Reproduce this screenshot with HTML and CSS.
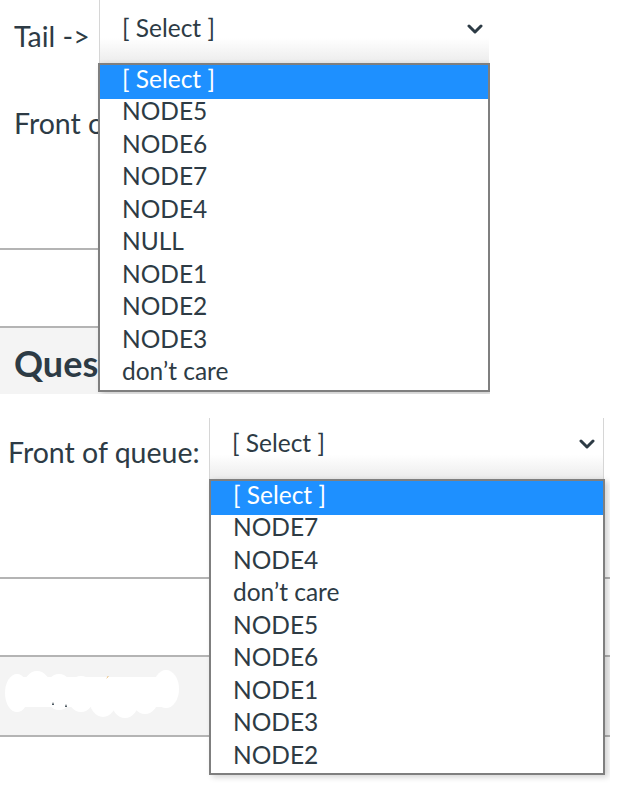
FILE: index.html
```html
<!DOCTYPE html>
<html>
<head>
<meta charset="utf-8">
<link rel="stylesheet" href="styles.css">
</head>
<body>
<div class="shot shot-top">
  <div class="row-select">
    <span class="label label-tail">Tail -&gt;</span>
    <div class="select select-top">
      <span class="select-text">[ Select ]</span>
      <svg class="chev" width="16" height="10" viewBox="0 0 16 10"><polyline points="2,2 8,8 14,2" fill="none" stroke="#2d3b45" stroke-width="3" stroke-linecap="round" stroke-linejoin="round"/></svg>
    </div>
  </div>
  <div class="row-front">
    <div class="clip"><span class="label">Front of queue:</span></div>
  </div>
  <div class="rule"></div>
  <div class="blank blank-top"></div>
  <div class="rule"></div>
  <div class="band band-top"><div class="clip"><span class="heading">Question 2</span></div></div>

  <ul class="dropdown dropdown-top">
    <li class="opt selected">[ Select ]</li>
    <li class="opt">NODE5</li>
    <li class="opt">NODE6</li>
    <li class="opt">NODE7</li>
    <li class="opt">NODE4</li>
    <li class="opt">NULL</li>
    <li class="opt">NODE1</li>
    <li class="opt">NODE2</li>
    <li class="opt">NODE3</li>
    <li class="opt">don’t care</li>
  </ul>
</div>

<div class="shot shot-bottom">
  <div class="gap-top"></div>
  <div class="row-select2">
    <span class="label label-front">Front of queue:</span>
    <div class="select select-bottom">
      <span class="select-text">[ Select ]</span>
      <svg class="chev" width="16" height="10" viewBox="0 0 16 10"><polyline points="2,2 8,8 14,2" fill="none" stroke="#2d3b45" stroke-width="3" stroke-linecap="round" stroke-linejoin="round"/></svg>
    </div>
  </div>
  <div class="blank blank-b1"></div>
  <div class="rule"></div>
  <div class="blank blank-b2"></div>
  <div class="rule"></div>
  <div class="band band-bottom">
    <svg class="scribble" width="180" height="56" viewBox="0 0 180 56">
      <g fill="#ffffff">
        <ellipse cx="14" cy="26" rx="12" ry="19"/>
        <ellipse cx="34" cy="22" rx="14" ry="18"/>
        <ellipse cx="56" cy="25" rx="14" ry="18"/>
        <ellipse cx="78" cy="27" rx="14" ry="18"/>
        <ellipse cx="100" cy="31" rx="14" ry="19"/>
        <ellipse cx="122" cy="33" rx="14" ry="18"/>
        <ellipse cx="142" cy="29" rx="14" ry="18"/>
        <ellipse cx="163" cy="22" rx="13" ry="19"/>
        <rect x="10" y="10" width="160" height="30" rx="10"/>
      </g>
      <path d="M49 38 l1 -3 l1 3 z M62 40 l1 -3 l1 3 z" fill="#2d3b45"/>
      <path d="M103 12 l2 -3 l0.6 0.6 z" fill="#e0a040"/>
    </svg>
  </div>
  <div class="rule"></div>

  <ul class="dropdown dropdown-bottom">
    <li class="opt selected">[ Select ]</li>
    <li class="opt">NODE7</li>
    <li class="opt">NODE4</li>
    <li class="opt">don’t care</li>
    <li class="opt">NODE5</li>
    <li class="opt">NODE6</li>
    <li class="opt">NODE1</li>
    <li class="opt">NODE3</li>
    <li class="opt">NODE2</li>
  </ul>
</div>
</body>
</html>
```

FILE: styles.css
```css
html, body {
  margin: 0;
  padding: 0;
  background: #ffffff;
  overflow: hidden;
}

body {
  font-family: Lato, "Open Sans", "Liberation Sans", sans-serif;
  color: #2d3b45;
}

.shot {
  position: relative;
  overflow: hidden;
  background: #ffffff;
  display: flex;
  flex-direction: column;
}

.shot-top {
  width: 490px;
  height: 394px;
}

.shot-bottom {
  width: 610px;
  height: 394px;
}

.label {
  font-size: 28.5px;
  white-space: nowrap;
  line-height: 32px;
}

.clip {
  width: 84px;
  overflow: hidden;
  white-space: nowrap;
}

/* top screenshot */
.row-select {
  display: flex;
  height: 63px;
  flex: none;
}

.label-tail {
  width: 85px;
  padding-left: 14px;
  padding-top: 20px;
  box-sizing: content-box;
}

.select {
  position: relative;
  box-sizing: border-box;
  border-left: 1px solid #d6d6d6;
  background: linear-gradient(to bottom, #ffffff 0%, #ffffff 60%, #ececec 100%);
  display: flex;
  justify-content: space-between;
}

.select-top {
  width: 390px;
  height: 63px;
  padding: 13px 6px 0 22px;
}

.select-text {
  font-size: 24.5px;
  line-height: 30px;
  color: #2d3b45;
}

.chev {
  margin-top: 11px;
  flex: none;
}

.row-front {
  height: 185px;
  flex: none;
  padding-left: 14px;
  padding-top: 44px;
  box-sizing: border-box;
}

.rule {
  height: 0;
  border-top: 2px solid #b4b4b4;
  flex: none;
}

.blank-top {
  height: 76px;
  flex: none;
}

.band {
  background: #f4f4f4;
  flex: none;
}

.band-top {
  height: 80px;
  padding-left: 14px;
  padding-top: 15px;
  box-sizing: border-box;
}

.heading {
  font-size: 36px;
  font-weight: 700;
  line-height: 40px;
  color: #2d3b45;
}

/* dropdown lists */
.dropdown {
  position: absolute;
  margin: 0;
  padding: 0;
  list-style: none;
  background: #ffffff;
  border: 2px solid #7f7f7f;
  box-sizing: border-box;
  box-shadow: 3px 2px 6px rgba(0, 0, 0, 0.18);
}

.dropdown-top {
  left: 98px;
  top: 63px;
  width: 392px;
  height: 329px;
}

.dropdown-bottom {
  left: 209px;
  top: 85px;
  width: 396px;
  height: 296px;
}

.opt {
  font-size: 24.5px;
  height: 32.5px;
  line-height: 24px;
  padding-left: 22px;
  white-space: nowrap;
  color: #2d3b45;
}

.opt.selected {
  background: #1e90ff;
  color: #ffffff;
  height: 34px;
  line-height: 28px;
}

/* bottom screenshot */
.gap-top {
  height: 24px;
  flex: none;
}

.row-select2 {
  display: flex;
  height: 61px;
  flex: none;
}

.label-front {
  width: 201px;
  padding-left: 8px;
  padding-top: 18px;
  box-sizing: content-box;
}

.select-bottom {
  width: 395px;
  height: 61px;
  padding: 10px 8px 0 22px;
  border-right: 1px solid #d6d6d6;
}

.blank-b1 {
  height: 98px;
  flex: none;
}

.blank-b2 {
  height: 76px;
  flex: none;
}

.band-bottom {
  height: 78px;
  padding-left: 3px;
  padding-top: 10px;
  box-sizing: border-box;
}

.scribble {
  display: block;
}
```
